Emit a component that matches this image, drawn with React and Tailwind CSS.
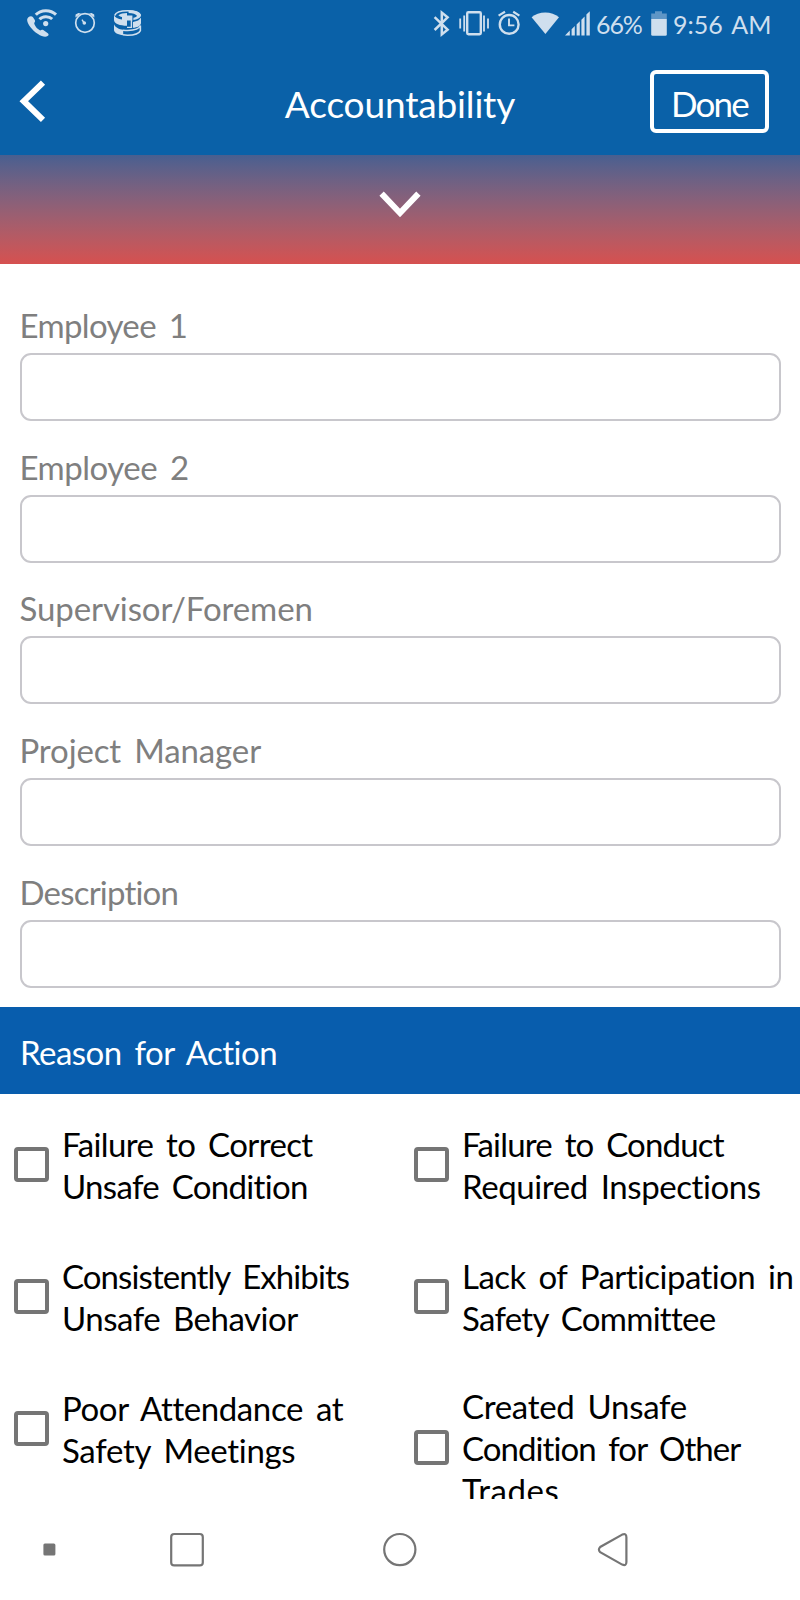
import clsx from "clsx";

const fields = [
  { label: "Employee 1", name: "employee1", tracking: "tracking-[-0.65px]" },
  { label: "Employee 2", name: "employee2", tracking: "tracking-[-0.5px]" },
  { label: "Supervisor/Foremen", name: "supervisor", tracking: "tracking-[-0.1px]" },
  { label: "Project Manager", name: "manager", tracking: "tracking-[-0.14px]" },
  { label: "Description", name: "description", tracking: "tracking-[-0.8px]" },
];

const reasons = [
  [
    { text: "Failure to Correct", tracking: "tracking-[-0.62px]" },
    { text: "Unsafe Condition", tracking: "tracking-[-0.68px]" },
  ],
  [
    { text: "Failure to Conduct", tracking: "tracking-[-0.8px]" },
    { text: "Required Inspections", tracking: "tracking-[-0.42px]" },
  ],
  [
    { text: "Consistently Exhibits", tracking: "tracking-[-0.91px]" },
    { text: "Unsafe Behavior", tracking: "tracking-[-0.5px]" },
  ],
  [
    { text: "Lack of Participation in", tracking: "tracking-[-0.55px]" },
    { text: "Safety Committee", tracking: "tracking-[-0.7px]" },
  ],
  [
    { text: "Poor Attendance at", tracking: "tracking-[-0.4px]" },
    { text: "Safety Meetings", tracking: "tracking-[-0.32px]" },
  ],
  [
    { text: "Created Unsafe", tracking: "tracking-[-0.3px]" },
    { text: "Condition for Other", tracking: "tracking-[-0.93px]" },
    { text: "Trades", tracking: "tracking-[0.5px]" },
  ],
];

// every status icon is drawn on the 48px high bar
const StatusIcon = ({ x, width, className, children }) => (
  <svg
    width={width}
    height="48"
    viewBox={`${x} 0 ${width} 48`}
    fill="none"
    className={clsx("shrink-0", className)}
  >
    {children}
  </svg>
);

const StatusBar = () => (
  <div className="flex h-12 pl-[26px] text-[#cfdfee]">
    <StatusIcon x={26} width={32}>
      <path
        d="M28.4 17.2C30 15.8 32 15.9 33 17.2L34.8 20.1C35.4 21.2 35 22 34.2 23C34.4 25.6 37.2 29 40.2 30.5C41.3 29.6 42.2 29.4 43.3 30.1L47.8 33.2C49 34.1 48.8 35.2 47.6 36C45.6 37.4 41.8 36.6 38 34C31.6 29.6 27.6 24.2 27.2 20.4C27 19 27.5 18 28.4 17.2Z"
        fill="currentColor"
      />
      <path d="M35.8 14.8C40.8 9.4 50.4 9.2 56 14.6" stroke="currentColor" strokeWidth="3" />
      <path d="M39.6 19.4C42.4 16 48.8 15.8 52.2 19" stroke="currentColor" strokeWidth="3" />
      <circle cx="45.7" cy="23.6" r="2.6" fill="currentColor" />
    </StatusIcon>
    <StatusIcon x={74} width={22} className="ml-4">
      <circle cx="85" cy="23" r="9.3" stroke="currentColor" strokeWidth="1.7" />
      <path d="M75.4 17.4L75.6 14.6L78.4 13L81 13.6ZM94.4 17.4L94.2 14.6L91.6 13L89 13.6Z" fill="currentColor" />
      <circle cx="84.3" cy="23" r="1.8" fill="currentColor" />
      <path d="M84 22.8L82 19.6" stroke="currentColor" strokeWidth="1.4" />
    </StatusIcon>
    <StatusIcon x={113} width={29} className="ml-[17px]">
      <path d="M114.7 15.5C116 12 121 10.8 127.5 10.8C134 10.8 139.4 12 140.4 15.5" stroke="currentColor" strokeWidth="1.6" />
      <path d="M118.4 15.2C120.4 13.6 123.5 13 127 12.9V15.6H132.4V20.4H127V25.8C120 25.6 114 23.8 114 20V15.2C115 17.6 118 19 122 19.6V17C120.4 16.6 119 16 118.4 15.2Z" fill="currentColor" />
      <path d="M128.6 10.4C135 10.4 141 12 141 15.6C140.4 18.4 137 19.6 133.4 20V17.8C135.4 17.4 136.6 16.8 137 15.8C136 14.2 132.6 13.2 128.6 13Z" fill="currentColor" />
      <path d="M141 17.6V23.2C140.4 26 137.4 27.4 133 27.8V22C137 21.4 140 20 141 17.6Z" fill="currentColor" />
      <path d="M131.4 20V27.4H127" stroke="currentColor" strokeWidth="1.4" />
      <path d="M114 24.2C115.4 27.6 119 29.2 123.2 29.7V35.2C118 34.6 114 33 114 29.8Z" fill="currentColor" />
      <path d="M123 30.2C131 30.8 139 29.6 140.4 25.6V30.6C139 34 134 35.2 127.5 35.2C126 35.2 124 35 123 34.8" stroke="currentColor" strokeWidth="1.5" />
    </StatusIcon>

    <StatusIcon x={433} width={18} className="ml-[291px]">
      <path d="M434.6 17.2L447.6 29.6L441.8 34.4V12.6L447.6 17.4L434.6 30" stroke="currentColor" strokeWidth="2.5" />
    </StatusIcon>
    <StatusIcon x={458} width={32} className="ml-[7px]">
      <rect x="467.2" y="12.2" width="13.6" height="22" rx="1.2" stroke="currentColor" strokeWidth="2.4" />
      <path d="M460.2 18.5V28.5M464.2 15.5V31.5M484 15.5V31.5M488 18.5V28.5" stroke="currentColor" strokeWidth="1.8" />
    </StatusIcon>
    <StatusIcon x={497} width={24} className="ml-[7px]">
      <circle cx="509.2" cy="24.4" r="9.4" stroke="currentColor" strokeWidth="2.4" />
      <path d="M498.6 15.6L505 11.8M519.4 15.6L513.2 11.8" stroke="currentColor" strokeWidth="2.2" />
      <path d="M509 18.6V25.4H514.4" stroke="currentColor" strokeWidth="1.9" />
    </StatusIcon>
    <StatusIcon x={531} width={29} className="ml-[10px]">
      <path d="M531.6 17.2C538.4 10.8 552 10.8 559 17.2L545.4 34Z" fill="currentColor" />
    </StatusIcon>
    <StatusIcon x={564} width={27} className="ml-[4px]">
      <path
        d="M565 35.4L569.8 30.6V35.4ZM571.6 29.2L574.8 26V35.4H571.6ZM576.6 24.4L579.8 21.2V35.4H576.6ZM581.4 19.8L584.6 16.6V35.4H581.4ZM586.4 14.6L589.8 11.2V35.4H586.4Z"
        fill="currentColor"
      />
    </StatusIcon>
    <span className="ml-[5px] w-[54px] whitespace-nowrap text-[25px] leading-[49px] tracking-[-1.1px]">66%</span>
    <StatusIcon x={650} width={18}>
      <path d="M655 11.2H662V13.4H666.8V19H651.2V13.4H655Z" fill="#5f96c6" />
      <path d="M651.2 19H666.8V34.4Q666.8 35.8 665.4 35.8H652.6Q651.2 35.8 651.2 34.4Z" fill="currentColor" />
    </StatusIcon>
    <span className="ml-[5px] whitespace-nowrap text-[25px] leading-[49px] [word-spacing:3px]">9:56 AM</span>
  </div>
);

const Header = () => (
  <header className="h-[155px] bg-[#0a61a8]">
    <StatusBar />
    <div className="grid grid-cols-[200px_400px_200px] pt-[22px] text-white">
      <button type="button" aria-label="Back" className="h-[64px] w-[64px]">
        <svg width="64" height="64" viewBox="0 70 64 64" fill="none">
          <path d="M43 82.6L23.8 101.2L43 119.8" stroke="currentColor" strokeWidth="6" />
        </svg>
      </button>
      <h1 className="whitespace-nowrap text-center text-[37px] leading-[68px] tracking-[-0.15px]">
        Accountability
      </h1>
      <button
        type="button"
        className="ml-[50px] h-[63px] w-[119px] whitespace-nowrap rounded-md border-4 border-white text-[35px] leading-[59px] tracking-[-1.8px]"
      >
        Done
      </button>
    </div>
  </header>
);

const Field = ({ label, name, tracking }) => (
  <div className="flex h-[141.7px] shrink-0 flex-col">
    <label
      htmlFor={name}
      className={clsx(
        "h-[49px] whitespace-nowrap text-[33px] leading-[42px] text-[#7f7f7f] [word-spacing:5px]",
        tracking
      )}
    >
      {label}
    </label>
    <input
      id={name}
      name={name}
      type="text"
      className="h-[68px] w-full rounded-[11px] border-2 border-[#c8c7cc] bg-white px-4 text-[33px] outline-none"
    />
  </div>
);

const Reason = ({ lines }) => (
  <label className={clsx("flex items-center gap-[13.5px] pl-[13.5px]", lines.length > 2 && "-mt-0.5")}>
    <input
      type="checkbox"
      className="mb-[3px] h-[35px] w-[35px] shrink-0 appearance-none rounded-[4px] border-4 border-[#757575]"
    />
    <span className="flex flex-col text-[33px] leading-[41.6px] text-black [word-spacing:5px]">
      {lines.map(({ text, tracking }) => (
        <span key={text} className={clsx("whitespace-nowrap", tracking)}>
          {text}
        </span>
      ))}
    </span>
  </label>
);

const NavBar = () => (
  <nav className="h-[101px] bg-white text-[#757575]">
    <svg width="800" height="101" viewBox="0 1499 800 101" fill="none" stroke="currentColor" strokeWidth="2.2">
      <rect x="43.4" y="1543.6" width="12" height="12" rx="1.5" fill="currentColor" stroke="none" />
      <rect x="171.2" y="1534" width="31.6" height="31.4" rx="3" />
      <circle cx="399.8" cy="1549.6" r="15.6" />
      <path d="M622.2 1534.6L600.2 1547Q597.6 1549.6 600.2 1552.2L622.2 1564.6Q626.4 1566.4 626.4 1562V1537.2Q626.4 1532.8 622.2 1534.6Z" />
    </svg>
  </nav>
);

const App = () => {
  return (
    <div className="flex h-[1600px] w-[800px] flex-col overflow-hidden bg-white font-['Lato',sans-serif]">
      <Header />
      <div className="flex h-[109px] justify-center bg-gradient-to-b from-[#485f90] to-[#d6504f] pt-[36px]">
        <svg width="42" height="27" viewBox="379 191 42 27" fill="none">
          <path d="M381.6 193.6L400 213L418.4 193.6" stroke="white" strokeWidth="6" />
        </svg>
      </div>

      <form className="flex h-[743px] flex-col px-[19.5px] pt-[40px]">
        {fields.map((field) => (
          <Field key={field.name} {...field} />
        ))}
      </form>

      <h2 className="h-[87px] whitespace-nowrap bg-[#085dad] pl-5 text-[33px] leading-[91px] tracking-[-0.54px] text-white [word-spacing:5px]">
        Reason for Action
      </h2>

      <div className="h-[405px] overflow-hidden pt-[30px]">
        <div className="grid grid-cols-2 items-start gap-y-[49px]">
          {reasons.map((lines) => (
            <Reason key={lines[0].text} lines={lines} />
          ))}
        </div>
      </div>

      <NavBar />
    </div>
  );
};

export default App;
